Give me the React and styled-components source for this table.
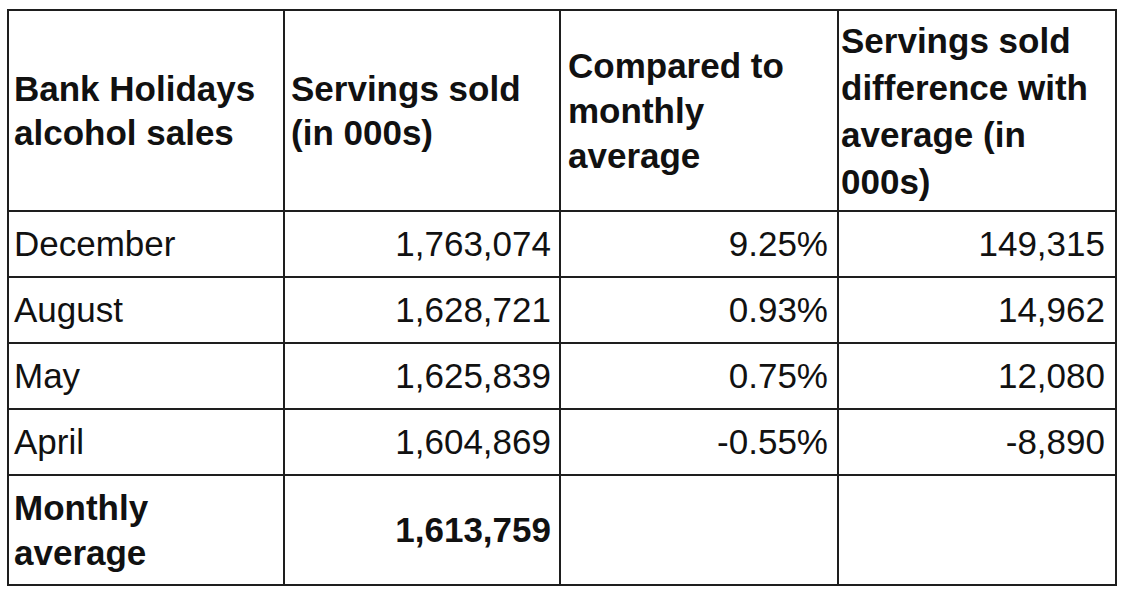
import React from "react";
import styled, { createGlobalStyle } from "styled-components";

const Global = createGlobalStyle`
  html, body { margin: 0; padding: 0; background: #fff; }
  body { font-family: "Liberation Sans", Arial, sans-serif; color: #111; }
`;

const Page = styled.div`
  padding: 9px 0 0 7px;
`;

const Table = styled.table`
  border-collapse: collapse;
  table-layout: fixed;
  width: 1108px;
  font-family: "Liberation Sans", Arial, sans-serif;
  font-size: 35px;
  color: #111;
`;

const Col = styled.col`
  width: ${(p) => p.$w}px;
`;

const Cell = styled.td`
  border: 2px solid #1e1e1e;
  padding: 0 ${(p) => (p.$align === "right" ? `${p.$pr ?? 8}px` : "4px")} 0 ${(p) => p.$pl ?? 5}px;
  text-align: ${(p) => p.$align || "left"};
  vertical-align: middle;
  font-weight: ${(p) => (p.$bold ? 700 : 400)};
  line-height: ${(p) => p.$lh || 46}px;
  height: ${(p) => p.$h}px;
  white-space: nowrap;
  box-sizing: border-box;
`;

const rows = [
  ["December", "1,763,074", "9.25%", "149,315"],
  ["August", "1,628,721", "0.93%", "14,962"],
  ["May", "1,625,839", "0.75%", "12,080"],
  ["April", "1,604,869", "-0.55%", "-8,890"],
];

export default function App() {
  return (
    <>
      <Global />
      <Page>
        <Table>
          <colgroup>
            <Col $w={276} />
            <Col $w={276} />
            <Col $w={278} />
            <Col $w={278} />
          </colgroup>
          <tbody>
            <tr>
              <Cell as="th" $bold $h={201} $lh={44} $pl={5}>
                Bank Holidays<br />alcohol sales
              </Cell>
              <Cell as="th" $bold $h={201} $lh={44} $pl={6}>
                Servings sold<br />(in 000s)
              </Cell>
              <Cell as="th" $bold $h={201} $lh={45} $pl={7}>
                Compared to<br />monthly<br />average
              </Cell>
              <Cell as="th" $bold $h={201} $lh={47} $pl={2}>
                Servings sold<br />difference with<br />average (in<br />000s)
              </Cell>
            </tr>
            {rows.map((r) => (
              <tr key={r[0]}>
                <Cell $h={66}>{r[0]}</Cell>
                <Cell $h={66} $align="right" $pr={8}>{r[1]}</Cell>
                <Cell $h={66} $align="right" $pr={9}>{r[2]}</Cell>
                <Cell $h={66} $align="right" $pr={10}>{r[3]}</Cell>
              </tr>
            ))}
            <tr>
              <Cell $bold $h={110} $lh={45}>
                Monthly<br />average
              </Cell>
              <Cell $bold $h={110} $align="right" $pr={8}>1,613,759</Cell>
              <Cell $h={110} />
              <Cell $h={110} />
            </tr>
          </tbody>
        </Table>
      </Page>
    </>
  );
}
